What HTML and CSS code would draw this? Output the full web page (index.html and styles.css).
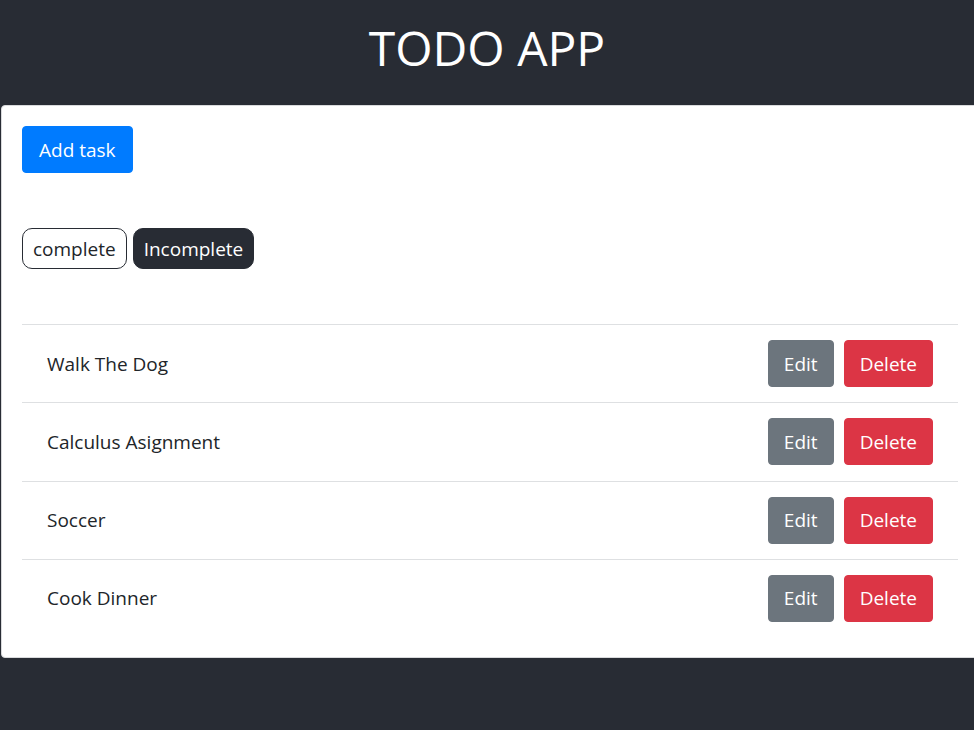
FILE: index.html
```html
<!DOCTYPE html>
<html lang="en">
<head>
<meta charset="utf-8">
<title>TODO APP</title>
<link rel="stylesheet" href="styles.css">
</head>
<body>
  <header class="app-header">
    <h1 class="app-title">TODO APP</h1>
  </header>
  <main class="card">
    <div class="card-body">
      <button class="btn btn-primary btn-lg">Add task</button>
      <div class="filters">
        <button class="pill pill-outline">complete</button>
        <button class="pill pill-dark">Incomplete</button>
      </div>
      <ul class="task-list">
        <li class="task">
          <span class="task-name">Walk The Dog</span>
          <div class="task-actions">
            <button class="btn btn-secondary btn-lg btn-sm-pad">Edit</button>
            <button class="btn btn-danger btn-lg btn-sm-pad">Delete</button>
          </div>
        </li>
        <li class="task">
          <span class="task-name">Calculus Asignment</span>
          <div class="task-actions">
            <button class="btn btn-secondary btn-lg btn-sm-pad">Edit</button>
            <button class="btn btn-danger btn-lg btn-sm-pad">Delete</button>
          </div>
        </li>
        <li class="task">
          <span class="task-name">Soccer</span>
          <div class="task-actions">
            <button class="btn btn-secondary btn-lg btn-sm-pad">Edit</button>
            <button class="btn btn-danger btn-lg btn-sm-pad">Delete</button>
          </div>
        </li>
        <li class="task">
          <span class="task-name">Cook Dinner</span>
          <div class="task-actions">
            <button class="btn btn-secondary btn-lg btn-sm-pad">Edit</button>
            <button class="btn btn-danger btn-lg btn-sm-pad">Delete</button>
          </div>
        </li>
      </ul>
    </div>
  </main>
</body>
</html>
```

FILE: styles.css
```css
* { box-sizing: border-box; }

html, body {
  margin: 0;
  padding: 0;
  background: #282c34;
  font-family: "Open Sans", "Noto Sans", sans-serif;
  color: #212529;
  overflow: hidden;
}

.app-header {
  padding: 18px 0 27px;
  text-align: center;
}

.app-title {
  margin: 0;
  font-size: 48px;
  line-height: 60px;
  font-weight: 400;
  color: #ffffff;
}

.card {
  margin-left: 1px;
  width: 978px;
  background: #ffffff;
  border: 1px solid #d9dadc;
  border-radius: 4px;
}

.card-body {
  padding: 20px;
}

.btn {
  display: inline-flex;
  align-items: center;
  justify-content: center;
  font-family: inherit;
  border: 1px solid transparent;
  border-radius: 4px;
  color: #ffffff;
  cursor: pointer;
}

.btn-lg {
  height: 47px;
  padding: 0 16px;
  font-size: 19px;
}

.btn-sm-pad {
  padding: 0 15px;
}

.btn-primary { background: #007bff; border-color: #007bff; }
.btn-secondary { background: #6c757d; border-color: #6c757d; }
.btn-danger { background: #dc3545; border-color: #dc3545; }

.filters {
  display: flex;
  gap: 6px;
  margin-top: 55px;
}

.pill {
  height: 41px;
  padding: 0 10px;
  font-family: inherit;
  font-size: 19px;
  border-radius: 10px;
  border: 1px solid #282c34;
  cursor: pointer;
}

.pill-outline { background: #ffffff; color: #212529; }
.pill-dark { background: #282c34; color: #ffffff; }

.task-list {
  list-style: none;
  margin: 55px 0 0;
  padding: 0;
}

.task {
  display: flex;
  align-items: center;
  justify-content: space-between;
  padding: 15px 25px 15.33px;
  border-top: 1px solid #dee0e2;
}

.task-name {
  font-size: 19px;
}

.task-actions {
  display: flex;
  gap: 10px;
}
```
